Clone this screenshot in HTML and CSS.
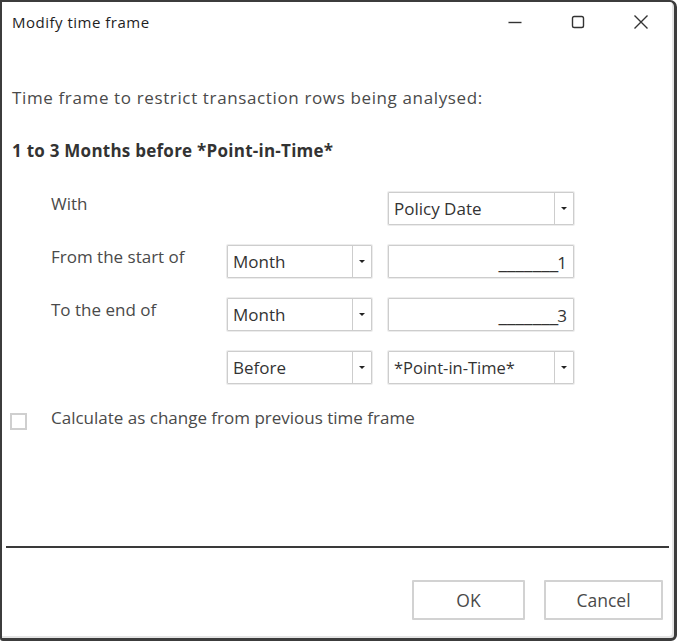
FILE: index.html
```html
<!DOCTYPE html>
<html>
<head>
<meta charset="utf-8">
<link rel="stylesheet" href="styles.css">
</head>
<body>
<div class="window">
  <div class="titlebar">
    <span class="title">Modify time frame</span>
    <div class="controls">
      <span class="ctl"><svg width="16" height="16" viewBox="0 0 16 16"><path d="M1.5 8.5H14.5" stroke="#333" stroke-width="1.4" fill="none"/></svg></span>
      <span class="ctl"><svg width="16" height="16" viewBox="0 0 16 16"><rect x="2.5" y="2.5" width="11" height="11" rx="1.8" stroke="#333" stroke-width="1.4" fill="none"/></svg></span>
      <span class="ctl"><svg width="16" height="16" viewBox="0 0 16 16"><path d="M1.5 1.5L14.5 14.5M14.5 1.5L1.5 14.5" stroke="#333" stroke-width="1.4" fill="none"/></svg></span>
    </div>
  </div>
  <div class="content">
    <p class="desc">Time frame to restrict transaction rows being analysed:</p>
    <p class="summary">1 to 3 Months before *Point-in-Time*</p>
    <div class="form">
      <div class="label">With</div>
      <div class="empty"></div>
      <div class="combo"><span class="val">Policy Date</span><span class="arrow"></span></div>

      <div class="label">From the start of</div>
      <div class="combo"><span class="val">Month</span><span class="arrow"></span></div>
      <div class="field"><span class="us">_______</span>1</div>

      <div class="label">To the end of</div>
      <div class="combo"><span class="val">Month</span><span class="arrow"></span></div>
      <div class="field"><span class="us">_______</span>3</div>

      <div class="label"></div>
      <div class="combo"><span class="val">Before</span><span class="arrow"></span></div>
      <div class="combo"><span class="val small">*Point-in-Time*</span><span class="arrow"></span></div>
    </div>
    <div class="check-row">
      <span class="checkbox"></span>
      <span class="check-label">Calculate as change from previous time frame</span>
    </div>
  </div>
  <div class="footer">
    <div class="separator"></div>
    <div class="buttons">
      <button class="btn ok">OK</button>
      <button class="btn cancel">Cancel</button>
    </div>
  </div>
</div>
</body>
</html>
```

FILE: styles.css
```css
html, body {
  margin: 0;
  padding: 0;
  background: #ffffff;
}
body {
  width: 677px;
  height: 641px;
  overflow: hidden;
  font-family: "Open Sans", "Noto Sans", "DejaVu Sans", sans-serif;
  color: #474747;
}
.window {
  box-sizing: border-box;
  width: 677px;
  height: 641px;
  border-top: 2px solid #3c3c3c;
  border-left: 2px solid #3c3c3c;
  border-right: 3px solid #3c3c3c;
  border-bottom: 3px solid #3c3c3c;
  border-top-right-radius: 7px;
  border-bottom-right-radius: 6px;
  border-bottom-left-radius: 3px;
  box-shadow: inset -2px -2px 0 #e4e4e4;
  display: flex;
  flex-direction: column;
  background: #fff;
}
.titlebar {
  height: 40px;
  display: flex;
  align-items: center;
  justify-content: space-between;
  padding-left: 10px;
}
.title {
  font-size: 15px;
  color: #1e1e1e;
  letter-spacing: 0.5px;
}
.controls {
  display: flex;
  align-items: center;
  gap: 47px;
  padding-right: 25px;
}
.ctl {
  width: 16px;
  height: 16px;
  display: block;
}
.ctl svg { display: block; }
.content {
  padding-left: 10px;
}
.desc {
  margin: 46px 0 0 0;
  font-size: 17px;
  line-height: 20px;
  letter-spacing: 0.63px;
  color: #4a4a4a;
}
.summary {
  margin: 33px 0 0 0;
  font-size: 17px;
  line-height: 20px;
  letter-spacing: 0.25px;
  font-weight: bold;
  color: #333;
}
.form {
  margin: 31px 0 0 39px;
  display: grid;
  grid-template-columns: 160px 145px 186px;
  grid-auto-rows: 33px;
  column-gap: 16px;
  row-gap: 20px;
}
.label {
  font-size: 17px;
  line-height: 20px;
  padding-top: 2px;
  color: #4a4a4a;
}
.combo, .field {
  box-sizing: border-box;
  border: 1px solid #cdcdcd;
  box-shadow: 0 0 0 1px #ececec;
  border-radius: 1px;
  display: flex;
  align-items: center;
  font-size: 17px;
  color: #333;
  background: #fff;
}
.combo .val {
  flex: 1;
  padding-left: 5px;
  white-space: nowrap;
}
.combo .val.small {
  font-size: 16.5px;
}
.arrow {
  width: 18px;
  align-self: stretch;
  border-left: 1px solid #cdcdcd;
  position: relative;
}
.arrow::after {
  content: "";
  position: absolute;
  left: 6px;
  top: 14px;
  border-left: 3px solid transparent;
  border-right: 3px solid transparent;
  border-top: 3px solid #222;
}
.field {
  justify-content: flex-end;
  align-items: baseline;
  padding-top: 5px;
  padding-right: 6px;
}
.field .us {
  font-size: 19.5px;
  letter-spacing: 0;
  line-height: 1;
  margin-right: -1px;
}
.check-row {
  margin-top: 24px;
  display: flex;
  align-items: flex-start;
}
.checkbox {
  box-sizing: border-box;
  width: 17px;
  height: 17px;
  margin: 5px 0 0 -2px;
  border: 2px solid #cfcfcf;
  background: #fff;
}
.check-label {
  margin-left: 24px;
  font-size: 17px;
  line-height: 20px;
  color: #4a4a4a;
}
.footer {
  margin-top: auto;
  padding-bottom: 18px;
}
.separator {
  height: 2px;
  background: #3a3a3a;
  margin: 0 5px 0 4px;
}
.buttons {
  margin-top: 32px;
  display: flex;
  justify-content: flex-end;
  gap: 19px;
  padding-right: 11px;
}
.btn {
  box-sizing: border-box;
  height: 40px;
  border: 2px solid #d2d2d2;
  background: #fff;
  font-family: "Open Sans", "Noto Sans", sans-serif;
  font-size: 17.5px;
  color: #4a4a4a;
  border-radius: 1px;
  padding: 0;
}
.btn.ok { width: 113px; }
.btn.cancel { width: 119px; }
```
